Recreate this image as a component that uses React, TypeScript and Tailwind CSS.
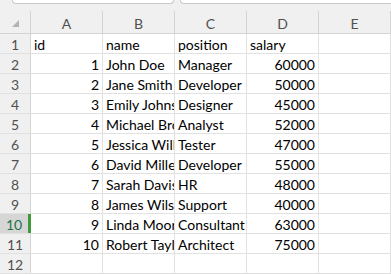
const cols = ['A', 'B', 'C', 'D', 'E'];

const data: (string | number)[][] = [
  ['id', 'name', 'position', 'salary'],
  [1, 'John Doe', 'Manager', 60000],
  [2, 'Jane Smith', 'Developer', 50000],
  [3, 'Emily Johnson', 'Designer', 45000],
  [4, 'Michael Brown', 'Analyst', 52000],
  [5, 'Jessica Williams', 'Tester', 47000],
  [6, 'David Miller', 'Developer', 55000],
  [7, 'Sarah Davis', 'HR', 48000],
  [8, 'James Wilson', 'Support', 40000],
  [9, 'Linda Moore', 'Consultant', 63000],
  [10, 'Robert Taylor', 'Architect', 75000],
  [],
];

const App = () => {
  return (
    <div className="w-[391px] h-[275px] overflow-hidden bg-white font-['Lato','Liberation_Sans',sans-serif] text-[14px] text-black">
      {/* formula bar edges */}
      <div className="bg-[#f0f0f0] h-[11px]">
        <div className="flex gap-[6px] h-[4px]">
          <div className="ml-[12px] w-[162px] h-[4px] bg-white border border-t-0 border-[#c8c8c8] rounded-b-[4px]"></div>
          <div className="flex-1 -mr-[10px] h-[4px] bg-white border border-t-0 border-[#c8c8c8] rounded-b-[4px]"></div>
        </div>
      </div>

      {/* column headers */}
      <div className="flex h-[23px] bg-[#f0f0f0] border-b border-[#d4d4d4]">
        <div className="w-[31px] shrink-0 border-r border-[#d4d4d4] relative">
          <svg className="absolute left-[12px] top-[9px]" width="7" height="7" viewBox="0 0 7 7">
            <polygon points="7,0 7,7 0,7" fill="#b4b4b4" />
          </svg>
        </div>
        {cols.map((c) => (
          <div
            key={c}
            className="w-[72px] shrink-0 border-r border-[#d4d4d4] flex items-center justify-center text-[#505050] pt-[2px]"
          >
            {c}
          </div>
        ))}
      </div>

      {/* rows */}
      {data.map((row, i) => {
        const active = i === 9;
        return (
          <div key={i} className="flex h-[20px] border-b border-[#e1e1e1]">
            <div
              className={`w-[31px] shrink-0 border-r flex items-center justify-center pt-[1px] ${
                active
                  ? 'bg-[#d6d6d6] text-[#217346] border-r-[3px] border-[#3f9b3a]'
                  : 'bg-[#f0f0f0] text-[#505050] border-[#d4d4d4]'
              }`}
            >
              {i + 1}
            </div>
            {cols.map((c, j) => {
              const v = row[j];
              const num = typeof v === 'number';
              return (
                <div
                  key={c}
                  className={`w-[72px] shrink-0 border-r border-[#e1e1e1] overflow-hidden whitespace-nowrap flex items-center pt-[1px] px-[3px] ${
                    num ? 'justify-end' : 'justify-start'
                  }`}
                >
                  {v ?? ''}
                </div>
              );
            })}
          </div>
        );
      })}
    </div>
  );
};

export default App;
